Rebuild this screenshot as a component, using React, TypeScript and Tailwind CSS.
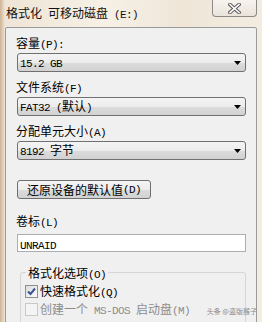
import React from "react";

// Split a string into CJK and ASCII runs so each gets its own font
const Mix = ({ t }: { t: string }) => (
  <>
    {t.split(/([\x00-\x7f]+)/).filter(Boolean).map((s, i) =>
      /^[\x00-\x7f]+$/.test(s) ? (
        <span key={i} className="font-['Liberation_Mono',monospace] text-[11px] tracking-[-0.6px] whitespace-pre">
          {s}
        </span>
      ) : (
        <span key={i} className="font-['Noto_Sans_CJK_SC',sans-serif] text-[12px]">
          {s}
        </span>
      )
    )}
  </>
);

const Label = ({ t, className = "" }: { t: string; className?: string }) => (
  <div className={`h-[16px] leading-[16px] text-black ${className}`}>
    <Mix t={t} />
  </div>
);

const Combo = ({ value }: { value: string }) => (
  <div className="ml-[1px] h-[19px] flex items-center justify-between border border-[#707070] rounded-[3px] bg-[linear-gradient(#f4f4f4_0%,#ececec_50%,#dcdcdc_51%,#d2d2d2_100%)] pl-[2px] pr-[4px] leading-[16px] text-black">
    <div>
      <Mix t={value} />
    </div>
    <svg width="7" height="4" viewBox="0 0 7 4">
      <path d="M0 0h7L3.5 4z" fill="#000" />
    </svg>
  </div>
);

const Check = ({ checked, disabled }: { checked?: boolean; disabled?: boolean }) => (
  <div
    className={`w-[13px] h-[13px] border flex items-center justify-center ${
      disabled
        ? "border-[#c8c8c8] bg-[#f4f4f4]"
        : "border-[#8f8f8f] bg-[linear-gradient(135deg,#dcdcdc,#fdfdfd)]"
    }`}
  >
    {checked && (
      <svg width="9" height="9" viewBox="0 0 9 9">
        <path d="M1 4.5l2.5 2.5L8 1.5" fill="none" stroke="#3b5394" strokeWidth="2" />
      </svg>
    )}
  </div>
);

export default function App() {
  return (
    <div className="relative w-[262px] h-[322px] overflow-hidden flex flex-col bg-[linear-gradient(90deg,#cdb396_0px,#efe5d6_5px,#f6f0e6_40%,#efe6d8_70%,#f3ece0_100%)]">
      {/* title bar */}
      <div className="h-[27px] flex justify-between items-start shrink-0">
        <div className="pl-[6px] pt-[4px] leading-[16px] text-[#111]">
          <Mix t="格式化 可移动磁盘 (E:)" />
        </div>
        <div className="mr-[5px] w-[45px] h-[17px] border border-t-0 border-[#8d8a86] rounded-b-[4px] bg-[linear-gradient(#f7f3ee,#e9e3da)] flex items-center justify-center">
          <svg width="13" height="11" viewBox="0 0 13 11">
            <path d="M2 1.5l9 8M11 1.5l-9 8" stroke="#5a5a5a" strokeWidth="3.6" strokeLinecap="square" />
            <path d="M2 1.5l9 8M11 1.5l-9 8" stroke="#fff" strokeWidth="1.6" strokeLinecap="square" />
          </svg>
        </div>
      </div>

      {/* client area */}
      <div className="mx-[5px] flex-1 border border-[#9a9a9a] rounded-t-[2px] bg-[#f0f0f0] px-[10px] pt-[6px]">
        <Label t="容量(P):" />
        <div className="mt-[3px]">
          <Combo value="15.2 GB" />
        </div>
        <Label t="文件系统(F)" className="mt-[6px]" />
        <div className="mt-[3px]">
          <Combo value="FAT32 (默认)" />
        </div>
        <Label t="分配单元大小(A)" className="mt-[6px]" />
        <div className="mt-[3px]">
          <Combo value="8192 字节" />
        </div>

        <div className="mt-[20px] ml-[1px] w-[134px] h-[19px] flex items-center justify-center border border-[#707070] rounded-[3px] bg-[linear-gradient(#f4f4f4_0%,#ececec_50%,#dcdcdc_51%,#d2d2d2_100%)] leading-[16px] text-black">
          <Mix t="还原设备的默认值(D)" />
        </div>

        <Label t="卷标(L)" className="mt-[13px]" />
        <div className="mt-[6px] ml-[1px] h-[18px] border border-[#abadb3] bg-white pl-[2px] leading-[16px] text-black">
          <Mix t="UNRAID" />
        </div>

        <fieldset className="mt-[12px] ml-[4px] border border-[#d5d5d5] rounded-[3px] pl-[4px] pb-[20px]">
          <legend className="ml-[1px] px-[2px] h-[16px] leading-[16px] text-black">
            <Mix t="格式化选项(O)" />
          </legend>
          <div className="mt-[3px] h-[16px] flex items-center gap-[2px] leading-[16px] text-black">
            <Check checked />
            <div>
              <Mix t="快速格式化(Q)" />
            </div>
          </div>
          <div className="mt-[2px] h-[16px] flex items-center gap-[2px] leading-[16px] text-[#8d8d8d]">
            <Check disabled />
            <div>
              <Mix t="创建一个 MS-DOS 启动盘(M)" />
            </div>
          </div>
        </fieldset>
      </div>

      {/* watermark */}
      <div className="absolute right-[5px] bottom-[7px] text-[7px] leading-[8px] text-[#8a8a8a] font-['Noto_Sans_CJK_SC',sans-serif]">
        头条 @盗版猴子
      </div>
    </div>
  );
}
